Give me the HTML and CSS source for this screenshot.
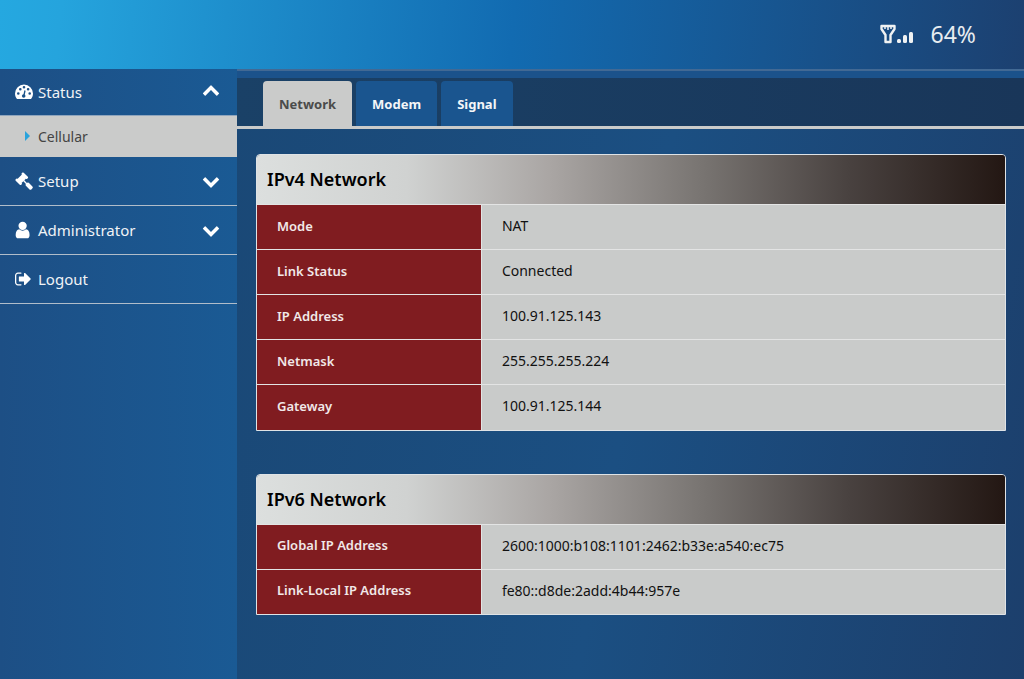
FILE: index.html
```html
<!DOCTYPE html>
<html lang="en">
<head>
    <meta charset="UTF-8">
    <meta name="viewport" content="width=device-width, initial-scale=1">
    <title>Cellular Status</title>
    <link rel="stylesheet" href="styles.css">
</head>
<body>
<header class="topbar">
    <svg class="signal-icon" viewBox="0 0 34 20" aria-hidden="true">
        <path d="M1.500 2h13v3l-4 6v7h-5v-7l-4-6z" fill="none" stroke="#f0f2f3" stroke-width="2.400" stroke-linejoin="round"/>
        <path d="M5 2v3M8 2v4M11 2v3" fill="none" stroke="#f0f2f3" stroke-width="1.500"/>
        <rect x="17" y="15" width="4" height="4" rx="1.500" fill="#f0f2f3"/>
        <rect x="23" y="11" width="4" height="8" rx="1.500" fill="#f0f2f3"/>
        <rect x="29" y="8" width="4" height="11" rx="1.500" fill="#f0f2f3"/>
    </svg>
    <span class="signal-value">64%</span>
</header>

<div class="layout">
    <nav class="sidebar">
        <a class="menu-item open" href="#status">
            <svg class="menu-icon" viewBox="0 0 18 16" aria-hidden="true">
                <path fill-rule="evenodd" d="M2 15C.7 13.500 0 11.500 0 9.500a9 9 0 0 1 18 0c0 2-.7 4-2 5.500zM2 9.500a1.300 1.300 0 1 0 2.600 0a1.300 1.300 0 1 0-2.600 0zM4 5.200a1.300 1.300 0 1 0 2.600 0a1.300 1.300 0 1 0-2.600 0zM7.700 3.200a1.300 1.300 0 1 0 2.600 0a1.300 1.300 0 1 0-2.600 0zM11.800 5.200a1.300 1.300 0 1 0 2.600 0a1.300 1.300 0 1 0-2.600 0zM13.400 9.500a1.300 1.300 0 1 0 2.600 0a1.300 1.300 0 1 0-2.600 0z"/>
                <path d="M10 6.500l-1.200 5.500" stroke="#1b538a" stroke-width="1.300"/>
                <circle cx="8.700" cy="12" r="1.800" fill="#1b538a"/>
            </svg>
            <span>Status</span>
            <svg class="chevron up" viewBox="0 0 1792 1792" aria-hidden="true"><path d="M1683 808l-742 741q-19 19-45 19t-45-19l-742-741q-19-19-19-45.500t19-45.500l166-165q19-19 45-19t45 19l531 531 531-531q19-19 45-19t45 19l166 165q19 19 19 45.500t-19 45.500z"/></svg>
        </a>
        <a class="submenu-item" href="#cellular">
            <svg class="caret" viewBox="0 0 5 10" aria-hidden="true"><path d="M0 0l5 5-5 5z"/></svg>
            <span>Cellular</span>
        </a>
        <a class="menu-item" href="#setup">
            <svg class="menu-icon" viewBox="0 0 1792 1792" aria-hidden="true"><path d="M1771 1536q0 53-37 90l-107 108q-39 37-91 37-53 0-90-37l-363-364q-38-36-38-90 0-53 43-96l-256-256-126 126q-14 14-34 14t-34-14q2 2 12.500 12t12.500 13 10 11.500 10 13.500 6 13.500 5.500 16.500 1.500 18q0 38-28 68-3 3-16.500 18t-19 20.500-18.500 16.500-22 15.500-22 9-26 4.500q-40 0-68-28l-408-408q-28-28-28-68 0-13 4.500-26t9-22 15.500-22 16.500-18.500 20.500-19 18-16.500q30-28 68-28 10 0 18 1.500t16.500 5.500 13.500 6 13.500 10 11.500 10 13 12.500 12 12.500q-14-14-14-34t14-34l348-348q14-14 34-14t34 14q-2-2-12.500-12t-12.500-13-10-11.500-10-13.500-6-13.500-5.500-16.500-1.500-18q0-38 28-68 3-3 16.500-18t19-20.500 18.500-16.500 22-15.500 22-9 26-4.500q40 0 68 28l408 408q28 28 28 68 0 13-4.500 26t-9 22-15.500 22-16.500 18.500-20.500 19-18 16.500q-30 28-68 28-10 0-18-1.500t-16.500-5.500-13.500-6-13.500-10-11.500-10-13-12.500-12-12.500q14 14 14 34t-14 34l-126 126 256 256q43-43 96-43 52 0 91 37l363 363q37 39 37 91z"/></svg>
            <span>Setup</span>
            <svg class="chevron" viewBox="0 0 1792 1792" aria-hidden="true"><path d="M1683 808l-742 741q-19 19-45 19t-45-19l-742-741q-19-19-19-45.500t19-45.500l166-165q19-19 45-19t45 19l531 531 531-531q19-19 45-19t45 19l166 165q19 19 19 45.500t-19 45.500z"/></svg>
        </a>
        <a class="menu-item" href="#administrator">
            <svg class="menu-icon" viewBox="192 64 1664 1664" aria-hidden="true"><path d="M1536 1399q0 109-62.500 187t-150.500 78h-854q-88 0-150.500-78t-62.500-187q0-85 8.500-160.500t31.500-152 58.500-131 94-89 134.500-34.500q131 128 313 128t313-128q76 0 134.500 34.500t94 89 58.500 131 31.500 152 8.500 160.500zm-256-887q0 159-112.500 271.500t-271.500 112.500-271.500-112.500-112.500-271.500 112.500-271.500 271.500-112.500 271.500 112.500 112.500 271.500z"/></svg>
            <span>Administrator</span>
            <svg class="chevron" viewBox="0 0 1792 1792" aria-hidden="true"><path d="M1683 808l-742 741q-19 19-45 19t-45-19l-742-741q-19-19-19-45.500t19-45.500l166-165q19-19 45-19t45 19l531 531 531-531q19-19 45-19t45 19l166 165q19 19 19 45.500t-19 45.500z"/></svg>
        </a>
        <a class="menu-item" href="#logout">
            <svg class="menu-icon" viewBox="64 0 1792 1792" aria-hidden="true"><path d="M704 1440q0 4 1 20t.5 26.500-3 23.500-10 19.500-20.500 6.500h-320q-119 0-203.500-84.500t-84.500-203.500v-704q0-119 84.500-203.500t203.500-84.500h320q13 0 22.500 9.500t9.500 22.500q0 4 1 20t.5 26.500-3 23.500-10 19.500-20.500 6.500h-320q-66 0-113 47t-47 113v704q0 66 47 113t113 47h312l11.500 1 11.500 3 8 5.500 7 9 2 13.500zm928-544q0 26-19 45l-544 544q-19 19-45 19t-45-19-19-45v-288h-448q-26 0-45-19t-19-45v-384q0-26 19-45t45-19h448v-288q0-26 19-45t45-19 45 19l544 544q19 19 19 45z"/></svg>
            <span>Logout</span>
        </a>
    </nav>

    <main class="content">
        <div class="tabs">
            <button class="tab active" type="button">Network</button>
            <button class="tab" type="button">Modem</button>
            <button class="tab" type="button">Signal</button>
        </div>

        <div class="panels">
            <section class="panel">
                <h2>IPv4 Network</h2>
                <table>
                    <tr><th scope="row">Mode</th><td>NAT</td></tr>
                    <tr><th scope="row">Link Status</th><td>Connected</td></tr>
                    <tr><th scope="row">IP Address</th><td>100.91.125.143</td></tr>
                    <tr><th scope="row">Netmask</th><td>255.255.255.224</td></tr>
                    <tr><th scope="row">Gateway</th><td>100.91.125.144</td></tr>
                </table>
            </section>

            <section class="panel">
                <h2>IPv6 Network</h2>
                <table>
                    <tr><th scope="row">Global IP Address</th><td>2600:1000:b108:1101:2462:b33e:a540:ec75</td></tr>
                    <tr><th scope="row">Link-Local IP Address</th><td>fe80::d8de:2add:4b44:957e</td></tr>
                </table>
            </section>
        </div>
    </main>
</div>
</body>
</html>
```
FILE: styles.css
```css
* {
    box-sizing: border-box;
}

body {
    display: flex;
    flex-direction: column;
    min-height: 100vh;
    margin: 0;
    font-family: "Noto Sans", "Open Sans", sans-serif;
    font-size: 13px;
    color: #111;
    background: #1a4a7b;
}

.topbar {
    display: flex;
    align-items: center;
    justify-content: flex-end;
    gap: 17px;
    height: 69px;
    padding: 0 48px 2px 0;
    background: linear-gradient(95deg, #25a8e0 0%, #25a4dd 6%, #126bb1 50%, #1c4070 100%);
}

.signal-icon {
    width: 34px;
    height: 20px;
}

.signal-value {
    font-size: 23px;
    color: #e8edf1;
}

.layout {
    display: flex;
    flex: 1;
}

.sidebar {
    flex: 0 0 237px;
    background: linear-gradient(90deg, #1d4f85, #1a5a94);
}

.menu-item {
    display: flex;
    align-items: center;
    gap: 5px;
    height: 49px;
    padding: 0 17px 1px 15px;
    border-bottom: 1px solid #b1bdca;
    font-size: 15px;
    color: #f0f3f6;
    text-decoration: none;
}

.menu-item.open {
    height: 47px;
    border-bottom-color: #8fa5bd;
}

.menu-icon,
.chevron {
    width: 18px;
    height: 18px;
    fill: #fff;
}

.chevron {
    margin-left: auto;
}

.chevron.up {
    transform: rotate(180deg);
}

.submenu-item {
    display: flex;
    align-items: center;
    gap: 8px;
    height: 41px;
    padding: 0 0 1px 25px;
    background: #cacbca;
    font-size: 14px;
    color: #444;
    text-decoration: none;
}

.caret {
    width: 5px;
    height: 10px;
    fill: #29a3dc;
}

.content {
    flex: 1;
    min-width: 0;
    border-top: 2px solid #426994;
    background: linear-gradient(100deg, #1a4876, #1b4f82 50%, #1c3f6c);
}

.tabs {
    display: flex;
    align-items: flex-end;
    gap: 4px;
    height: 58px;
    padding-left: 26px;
    border-top: 7px solid #1b528b;
    border-bottom: 3px solid #cacbca;
    background: linear-gradient(90deg, #1a4167, #193659);
}

.tab {
    height: 45px;
    padding: 0 16px;
    border: none;
    border-radius: 4px 4px 0 0;
    background: #1a558f;
    font-family: inherit;
    font-size: 13px;
    font-weight: 700;
    color: #f4f6f8;
    cursor: pointer;
}

.tab.active {
    background: #cacbca;
    color: #4b4b4b;
}

.panels {
    display: flex;
    flex-direction: column;
    gap: 43px;
    padding: 25px 18px 44px 19px;
}

.panel {
    overflow: hidden;
    border: 1px solid #dfe3e6;
    border-radius: 4px 4px 0 0;
}

.panel h2 {
    margin: 0;
    padding: 0 10px;
    background: linear-gradient(90deg, #dcdfde 0%, #d0d2d1 20%, #aaa6a4 39%, #777370 60%, #494240 79%, #231713 100%);
    font-size: 18px;
    font-weight: 600;
    line-height: 49px;
    color: #000;
}

table {
    width: 100%;
    border-collapse: collapse;
}

th,
td {
    height: 45px;
    padding: 0 20px 3px;
    border-top: 1px solid #e3e4e4;
    text-align: left;
}

th {
    width: 30%;
    background: #801c20;
    font-size: 13px;
    font-weight: 600;
    color: #f1e8e8;
}

td {
    border-left: 1px solid #e3e4e4;
    background: #c9cbca;
    font-size: 14px;
}
```
